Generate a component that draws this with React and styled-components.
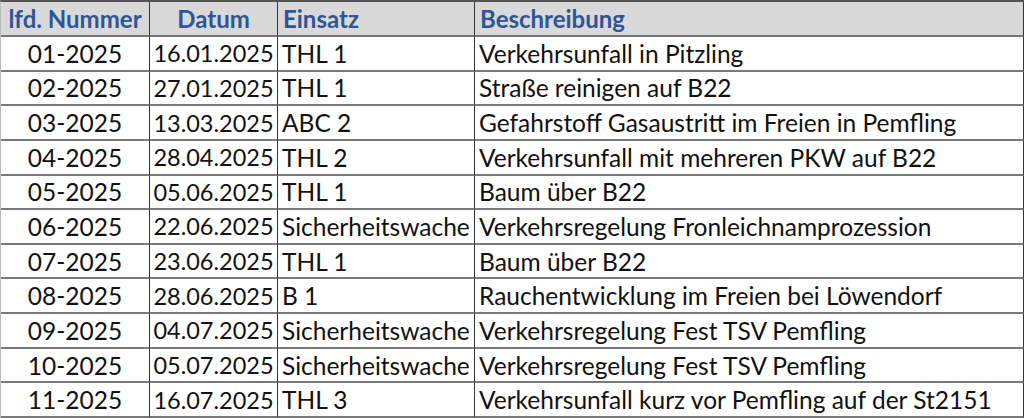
import React from "react";
import styled, { createGlobalStyle } from "styled-components";

const rows = [
  ["01-2025", "16.01.2025", "THL 1", "Verkehrsunfall in Pitzling"],
  ["02-2025", "27.01.2025", "THL 1", "Straße reinigen auf B22"],
  ["03-2025", "13.03.2025", "ABC 2", "Gefahrstoff Gasaustritt im Freien in Pemfling"],
  ["04-2025", "28.04.2025", "THL 2", "Verkehrsunfall mit mehreren PKW auf B22"],
  ["05-2025", "05.06.2025", "THL 1", "Baum über B22"],
  ["06-2025", "22.06.2025", "Sicherheitswache", "Verkehrsregelung Fronleichnamprozession"],
  ["07-2025", "23.06.2025", "THL 1", "Baum über B22"],
  ["08-2025", "28.06.2025", "B 1", "Rauchentwicklung im Freien bei Löwendorf"],
  ["09-2025", "04.07.2025", "Sicherheitswache", "Verkehrsregelung Fest TSV Pemfling"],
  ["10-2025", "05.07.2025", "Sicherheitswache", "Verkehrsregelung Fest TSV Pemfling"],
  ["11-2025", "16.07.2025", "THL 3", "Verkehrsunfall kurz vor Pemfling auf der St2151"],
];

const GlobalStyle = createGlobalStyle`
  html, body {
    margin: 0;
    padding: 0;
    background: #fff;
  }
  body {
    font-family: Lato, "Open Sans", sans-serif;
  }
`;

const Sheet = styled.div`
  width: 1024px;
  height: 418px;
  overflow: hidden;
  display: grid;
  grid-template-columns: 149px 128px 197px 549px;
  grid-template-rows: 35px repeat(11, 1fr);
  box-sizing: border-box;
  border-top: 2px solid #555;
  border-left: 1px solid #bbb;
`;

const Head = styled.div`
  background: #d9d9d9;
  color: #2f5597;
  font-weight: 700;
  font-size: 24px;
  display: flex;
  align-items: center;
  justify-content: ${(p) => (p.$align === "center" ? "center" : "flex-start")};
  padding: 0 ${(p) => (p.$align === "center" ? "0" : "5px")};
  border-right: 1px solid #333;
  border-bottom: 2px solid #777;
  white-space: nowrap;
`;

const Cell = styled.div`
  color: #111;
  font-size: ${(p) => (p.$narrow ? "23.5px" : "24.5px")};
  display: flex;
  align-items: center;
  justify-content: ${(p) => (p.$align === "center" ? "center" : "flex-start")};
  padding: 0 ${(p) => (p.$align === "center" ? "0" : "4px")};
  border-right: 1px solid #333;
  border-bottom: 2px solid #7a7a7a;
  white-space: nowrap;
`;

export default function App() {
  return (
    <>
      <GlobalStyle />
      <Sheet>
        <Head $align="center">lfd. Nummer</Head>
        <Head $align="center">Datum</Head>
        <Head>Einsatz</Head>
        <Head>Beschreibung</Head>
        {rows.map((r) => (
          <React.Fragment key={r[0]}>
            <Cell $align="center">{r[0]}</Cell>
            <Cell $align="center" $narrow>{r[1]}</Cell>
            <Cell>{r[2]}</Cell>
            <Cell>{r[3]}</Cell>
          </React.Fragment>
        ))}
      </Sheet>
    </>
  );
}
